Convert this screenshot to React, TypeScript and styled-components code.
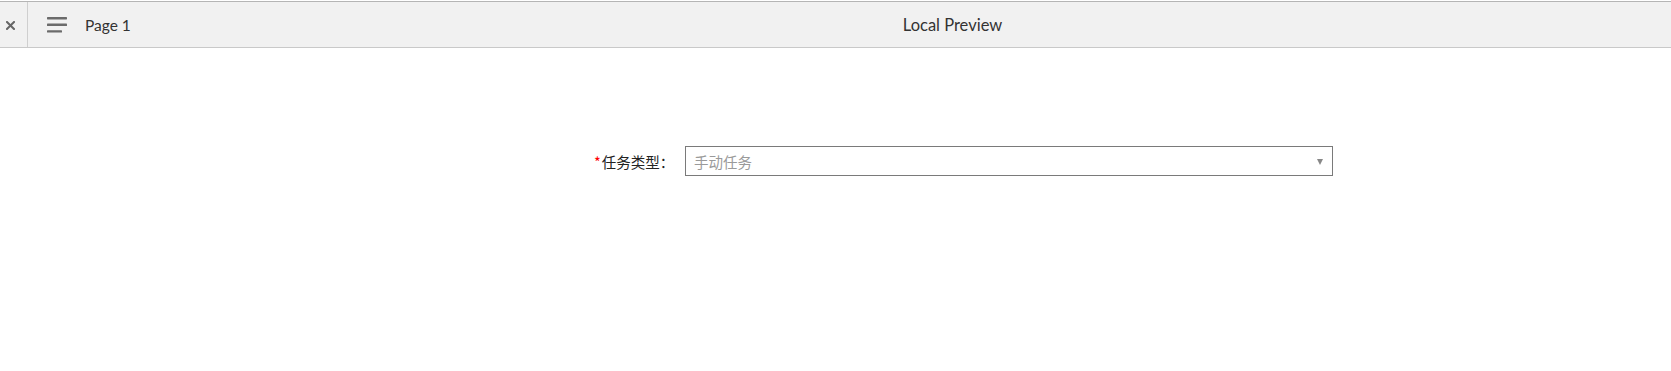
import React from "react";
import styled, { createGlobalStyle } from "styled-components";

const GlobalStyle = createGlobalStyle`
  html, body {
    margin: 0;
    padding: 0;
    background: #fff;
  }
  body {
    font-family: Lato, "Noto Sans CJK SC", sans-serif;
  }
`;

export default function App() {
  return (
    <>
      <GlobalStyle />
      <Page>
        <Toolbar>
          <CloseButton aria-label="close">
            <svg width="9" height="9" viewBox="0 0 9 9">
              <path
                d="M1 1 L8 8 M8 1 L1 8"
                stroke="#666"
                strokeWidth="2"
                strokeLinecap="square"
              />
            </svg>
          </CloseButton>
          <PageNav>
            <MenuIcon width="21" height="16" viewBox="0 0 21 16">
              <rect x="0" y="0" width="20" height="2.4" rx="0.6" fill="#6b6b6b" />
              <rect x="0" y="6.6" width="20" height="2.4" rx="0.6" fill="#6b6b6b" />
              <rect x="0" y="13.2" width="15" height="2.4" rx="0.6" fill="#6b6b6b" />
            </MenuIcon>
            <PageName>Page 1</PageName>
          </PageNav>
          <Title>Local Preview</Title>
        </Toolbar>

        <Content>
          <FormRow>
            <Label>
              <Required>*</Required>任务类型：
            </Label>
            <Select>
              <Placeholder>手动任务</Placeholder>
              <Caret />
            </Select>
          </FormRow>
        </Content>
      </Page>
    </>
  );
}

const Page = styled.div`
  width: 100%;
  min-height: 371px;
  padding-top: 1px;
  box-sizing: border-box;
`;

const Toolbar = styled.div`
  display: flex;
  align-items: stretch;
  height: 45px;
  background: #f1f1f1;
  border-top: 1px solid #b5b5b5;
  border-bottom: 1px solid #c9c9c9;
`;

const CloseButton = styled.div`
  width: 28px;
  display: flex;
  align-items: center;
  padding-left: 6px;
  box-sizing: border-box;
  border-right: 1px solid #cfcfcf;
  padding-top: 1px;
`;

const PageNav = styled.div`
  width: 206px;
  display: flex;
  align-items: center;
  padding-left: 19px;
  box-sizing: border-box;
`;

const MenuIcon = styled.svg`
  margin-right: 17px;
  margin-top: 1px;
`;

const PageName = styled.span`
  font-size: 15.5px;
  color: #333;
  padding-top: 1px;
`;

const Title = styled.div`
  flex: 1;
  display: flex;
  align-items: center;
  justify-content: center;
  font-size: 16.5px;
  color: #333;
`;

const Content = styled.div`
  padding-top: 98px;
`;

const FormRow = styled.div`
  display: flex;
  align-items: center;
  padding-left: 594px;
`;

const Label = styled.label`
  width: 91px;
  font-family: "Noto Sans CJK SC", sans-serif;
  font-size: 14.5px;
  color: #222;
  white-space: nowrap;
`;

const Required = styled.span`
  color: #f00;
  margin-right: 1px;
`;

const Select = styled.div`
  width: 648px;
  height: 30px;
  box-sizing: border-box;
  border: 1px solid #7a7a7a;
  display: flex;
  align-items: center;
  justify-content: space-between;
  padding: 0 9px 0 8px;
`;

const Placeholder = styled.span`
  font-family: "Noto Sans CJK SC", sans-serif;
  font-size: 14.5px;
  color: #9a9a9a;
`;

const Caret = styled.span`
  width: 0;
  height: 0;
  border-left: 3px solid transparent;
  border-right: 3px solid transparent;
  border-top: 6px solid #888;
  margin-top: 1px;
`;
